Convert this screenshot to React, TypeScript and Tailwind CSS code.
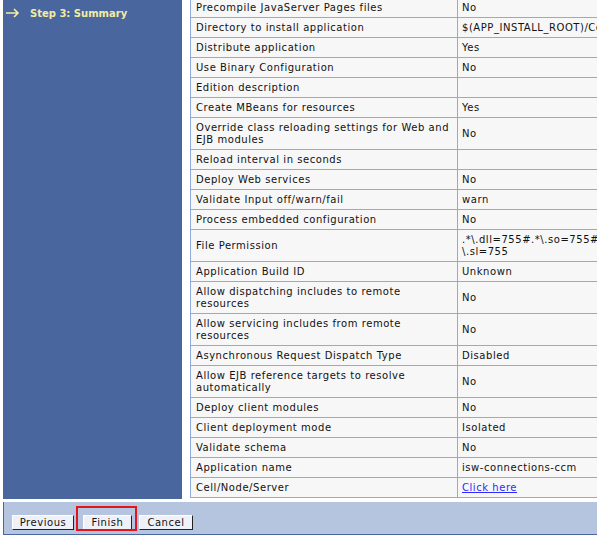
import React from 'react';

type Row = { label: string[]; value: React.ReactNode[]; h: number };

const rows: Row[] = [
  { label: ['Precompile JavaServer Pages files'], value: ['No'], h: 20 },
  { label: ['Directory to install application'], value: ['$(APP_INSTALL_ROOT)/Cell01'], h: 20 },
  { label: ['Distribute application'], value: ['Yes'], h: 20 },
  { label: ['Use Binary Configuration'], value: ['No'], h: 20 },
  { label: ['Edition description'], value: [''], h: 20 },
  { label: ['Create MBeans for resources'], value: ['Yes'], h: 20 },
  { label: ['Override class reloading settings for Web and', 'EJB modules'], value: ['No'], h: 32 },
  { label: ['Reload interval in seconds'], value: [''], h: 20 },
  { label: ['Deploy Web services'], value: ['No'], h: 20 },
  { label: ['Validate Input off/warn/fail'], value: ['warn'], h: 20 },
  { label: ['Process embedded configuration'], value: ['No'], h: 20 },
  { label: ['File Permission'], value: ['.*\\.dll=755#.*\\.so=755#.*\\.a=755#.*', '\\.sl=755'], h: 32 },
  { label: ['Application Build ID'], value: ['Unknown'], h: 20 },
  { label: ['Allow dispatching includes to remote', 'resources'], value: ['No'], h: 32 },
  { label: ['Allow servicing includes from remote', 'resources'], value: ['No'], h: 32 },
  { label: ['Asynchronous Request Dispatch Type'], value: ['Disabled'], h: 20 },
  { label: ['Allow EJB reference targets to resolve', 'automatically'], value: ['No'], h: 32 },
  { label: ['Deploy client modules'], value: ['No'], h: 20 },
  { label: ['Client deployment mode'], value: ['Isolated'], h: 20 },
  { label: ['Validate schema'], value: ['No'], h: 20 },
  { label: ['Application name'], value: ['isw-connections-ccm'], h: 20 },
  {
    label: ['Cell/Node/Server'],
    value: [
      <a key="l" href="#" className="text-[#2b2bff] underline">
        Click here
      </a>,
    ],
    h: 20,
  },
];

const Lines = ({ items }: { items: React.ReactNode[] }) => (
  <>
    {items.map((t, i) => (
      <div key={i} className="leading-[12px] whitespace-nowrap">
        {t}
      </div>
    ))}
  </>
);

const ConsoleButton = ({ children, w }: { children: React.ReactNode; w: string }) => (
  <button
    className={`${w} h-[15px] shrink-0 bg-[#eef1f8] border-t border-l border-t-white border-l-white border-r border-b border-r-[#222] border-b-[#222] text-[10px] tracking-[0.55px] text-[#111] leading-[12px] flex items-center justify-center`}
  >
    {children}
  </button>
);

export default function App() {
  return (
    <div className="relative w-[597px] h-[537px] overflow-hidden bg-white font-['DejaVu_Sans',sans-serif] text-[10px] text-[#111]">
      <div className="flex h-[499px] pl-[3px]">
        <div className="w-[179px] shrink-0 bg-[#4a669f] pt-[6px]">
          <div className="flex items-center h-[14px]">
            <svg width="14" height="10" viewBox="0 0 14 10" className="ml-[3px]">
              <path d="M0 5h12M8 1l4 4-4 4" stroke="#f6ee9c" strokeWidth="1.6" fill="none" />
            </svg>
            <span className="ml-[10px] font-bold text-[#f3eca0] whitespace-nowrap">Step 3: Summary</span>
          </div>
        </div>
        <div className="ml-[8px] mt-[-3px] shrink-0">
          <table className="border-collapse bg-[#f7f7f7] tracking-[0.55px]">
            <tbody>
              {rows.map((r, i) => (
                <tr key={i} style={{ height: r.h }}>
                  <td className="w-[267px] border border-[#92aad9] pl-[5px] pr-[4px] align-middle">
                    <Lines items={r.label} />
                  </td>
                  <td className="w-[240px] border border-[#92aad9] pl-[4px] align-middle">
                    <Lines items={r.value} />
                  </td>
                </tr>
              ))}
            </tbody>
          </table>
        </div>
      </div>
      <div className="mt-[3px] ml-[3px] h-[33px] bg-[#b5c5df] border-l border-b border-[#4a669f] flex items-center pl-[8px] pt-[9px]">
        <ConsoleButton w="w-[62px]">Previous</ConsoleButton>
        <div className="ml-[9px]">
          <ConsoleButton w="w-[49px]">Finish</ConsoleButton>
        </div>
        <div className="ml-[7px]">
          <ConsoleButton w="w-[54px]">Cancel</ConsoleButton>
        </div>
      </div>
      <div className="absolute left-[76px] top-[506px] w-[61px] h-[25px] border-2 border-[#e3141b]" />
    </div>
  );
}
